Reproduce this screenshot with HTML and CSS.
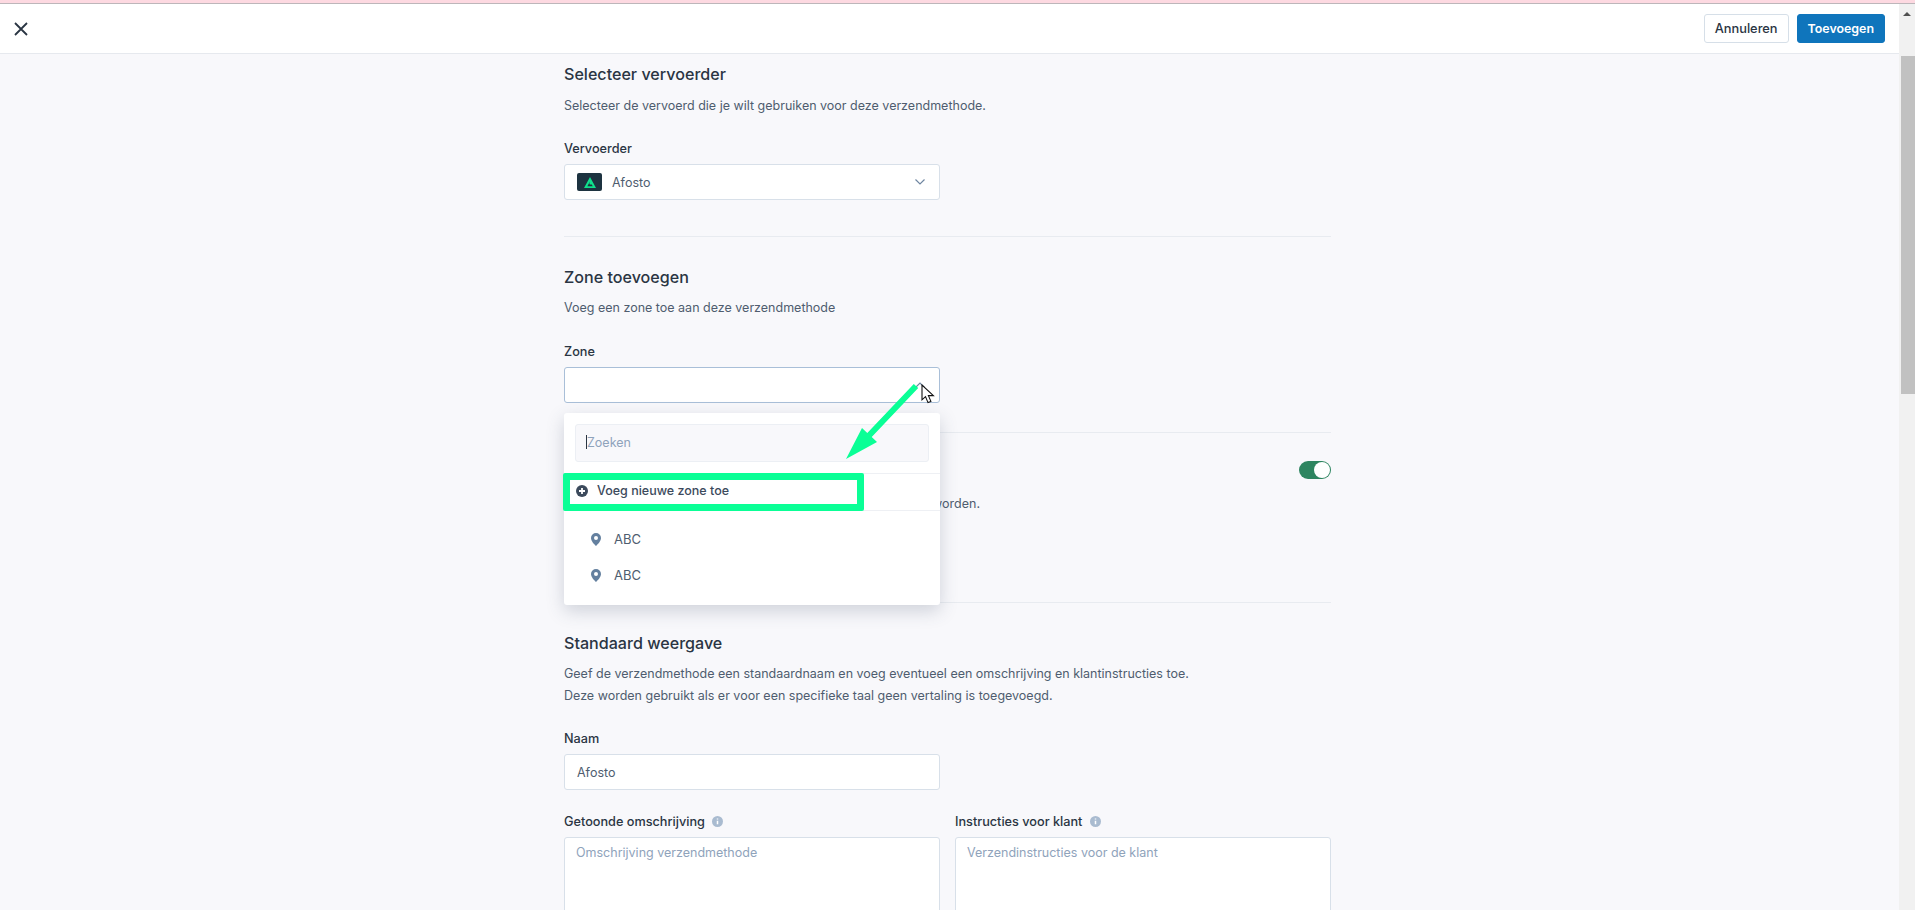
FILE: index.html
```html
<!DOCTYPE html>
<html lang="en">
<head>
  <meta charset="UTF-8" />
  <title>Verzendmethode toevoegen</title>
  <link rel="stylesheet" href="styles.css">
</head>
<body>
  <div class="strip"></div>
  <div class="frame">
    <div class="page">
      <header class="topbar">
        <svg class="close" width="16" height="16" viewBox="0 0 16 16"><path d="M2 2l12 12M14 2L2 14" fill="none" stroke="#2a3543" stroke-width="1.8"/></svg>
        <div class="actions">
          <button class="btn">Annuleren</button>
          <button class="btn primary">Toevoegen</button>
        </div>
      </header>

      <main class="content">
        <section class="section first">
          <h2>Selecteer vervoerder</h2>
          <p class="desc">Selecteer de vervoerd die je wilt gebruiken voor deze verzendmethode.</p>
          <label class="label">Vervoerder</label>
          <div class="field select">
            <span class="logo">
              <svg width="12" height="11" viewBox="0 0 12 11"><path fill-rule="evenodd" d="M6 0l6 11H0zM6 4.500L3.300 9.200h5.400l-.9-1.700H5.900l-.5-.9z" fill="#0fe08c"/></svg>
            </span>
            <span class="value">Afosto</span>
            <svg class="chevron" width="12" height="8" viewBox="0 0 12 8"><path d="M1.500 1.500L6 6l4.500-4.500" fill="none" stroke="#6f86a1" stroke-width="1.200"/></svg>
          </div>
        </section>

        <section class="section zone">
          <h2>Zone toevoegen</h2>
          <p class="desc">Voeg een zone toe aan deze verzendmethode</p>
          <label class="label">Zone</label>
          <div class="field focus">
            <svg class="chevron" width="12" height="8" viewBox="0 0 12 8"><path d="M1.500 6.500L6 2l4.500 4.500" fill="none" stroke="#6f86a1" stroke-width="1.200"/></svg>
          </div>

          <div class="dropdown">
            <div class="search"><span class="caret"></span><span>Zoeken</span></div>
            <div class="add-row">
              <svg width="12" height="12" viewBox="0 0 12 12"><circle cx="6" cy="6" r="6" fill="#3c4a5c"/><path d="M6 3v6M3 6h6" stroke="#fff" stroke-width="1.800"/></svg>
              <span>Voeg nieuwe zone toe</span>
              <div class="highlight"></div>
            </div>
            <ul class="zones">
              <li>
                <svg width="10" height="13" viewBox="0 0 10 13"><path fill-rule="evenodd" d="M5 0a5 5 0 0 1 5 5c0 3-3 6-5 8-2-2-5-5-5-8a5 5 0 0 1 5-5zm0 3a2 2 0 1 0 0 4 2 2 0 0 0 0-4z" fill="#64809f"/></svg>
                <span>ABC</span>
              </li>
              <li>
                <svg width="10" height="13" viewBox="0 0 10 13"><path fill-rule="evenodd" d="M5 0a5 5 0 0 1 5 5c0 3-3 6-5 8-2-2-5-5-5-8a5 5 0 0 1 5-5zm0 3a2 2 0 1 0 0 4 2 2 0 0 0 0-4z" fill="#64809f"/></svg>
                <span>ABC</span>
              </li>
            </ul>
          </div>

          <svg class="pointer" width="84" height="84" viewBox="0 0 84 84"><path d="M73.800 3.900L78.200 8.100 31.700 57.100 37 62 6 79 22 48 27.300 52.900z" fill="#0aff96"/></svg>
          <svg class="cursor" width="15" height="20" viewBox="0 0 15 20"><path d="M1 1v14.800l3.500-3.200 2.500 6 2.900-1.200-2.500-5.800h5z" fill="#fff" stroke="#111" stroke-width="1.100"/></svg>
        </section>

        <section class="section active-zone">
          <div class="switch-row">
            <span class="switch"><i></i></span>
          </div>
          <p class="desc">worden.</p>
        </section>

        <section class="section last">
          <h2>Standaard weergave</h2>
          <p class="desc">Geef de verzendmethode een standaardnaam en voeg eventueel een omschrijving en klantinstructies toe.<br>Deze worden gebruikt als er voor een specifieke taal geen vertaling is toegevoegd.</p>
          <label class="label">Naam</label>
          <div class="field"><span class="value plain">Afosto</span></div>
          <div class="columns">
            <div>
              <label class="label">Getoonde omschrijving <svg class="info" width="11" height="11" viewBox="0 0 11 11"><circle cx="5.500" cy="5.500" r="5.500" fill="#a9bbd0"/><path d="M5.500 2.500v1M5.500 4.800v3.500" stroke="#fff" stroke-width="1.500"/></svg></label>
              <div class="area">Omschrijving verzendmethode</div>
            </div>
            <div>
              <label class="label">Instructies voor klant <svg class="info" width="11" height="11" viewBox="0 0 11 11"><circle cx="5.500" cy="5.500" r="5.500" fill="#a9bbd0"/><path d="M5.500 2.500v1M5.500 4.800v3.500" stroke="#fff" stroke-width="1.500"/></svg></label>
              <div class="area">Verzendinstructies voor de klant</div>
            </div>
          </div>
        </section>
      </main>
    </div>

    <div class="scrollbar">
      <span class="arrow"></span>
      <div class="thumb"></div>
    </div>
  </div>
</body>
</html>
```

FILE: styles.css
```css
* {
  box-sizing: border-box;
}
html, body {
  height: 100%;
}
body {
  margin: 0;
  overflow: hidden;
  display: flex;
  flex-direction: column;
  font-family: Inter, "Noto Sans", sans-serif;
  font-size: 12.5px;
  color: #2a3543;
  background: #f8f8fb;
}
.strip {
  height: 4px;
  flex: none;
  background: #fdd9e1;
  border-bottom: 1px solid #bdb6ba;
}
.frame {
  flex: 1;
  display: flex;
  min-height: 0;
}
.page {
  flex: 1;
  min-width: 0;
  overflow: hidden;
}
.topbar {
  height: 50px;
  display: flex;
  align-items: center;
  justify-content: space-between;
  padding: 0 14px 0 13px;
  background: #fff;
  border-bottom: 1px solid #e6e9ee;
}
.actions {
  display: flex;
  gap: 8px;
}
.btn {
  height: 29px;
  padding: 0 10px;
  font-family: inherit;
  font-size: 12.8px;
  font-weight: 500;
  color: #2a3543;
  background: #fff;
  border: 1px solid #d6dfe8;
  border-radius: 3px;
}
.btn.primary {
  font-size: 12.4px;
  color: #fff;
  font-weight: 600;
  background: #0f75bc;
  border-color: #0f75bc;
}
.content {
  width: 767px;
  margin-left: 564px;
}
.section {
  position: relative;
  padding: 30px 0 36px;
  border-bottom: 1px solid #e8ebf0;
}
.section.first {
  padding-top: 10px;
}
.section.zone {
  padding-bottom: 29px;
}
.section.zone .desc {
  margin-top: 10px;
}
.section.zone .label {
  margin-top: 24px;
}
.section.last {
  padding-top: 30px;
  border-bottom: none;
}
h2 {
  margin: 0;
  font-size: 16.1px;
  line-height: 20px;
  font-weight: 500;
  color: #2a3543;
}
.desc {
  margin: 11px 0 0;
  line-height: 22px;
  color: #4f5d6f;
}
.section.last .desc {
  margin-top: 10px;
}
.label {
  display: block;
  margin: 23px 0 6px;
  font-size: 12.7px;
  line-height: 18px;
  font-weight: 500;
  color: #2a3543;
}
.field {
  width: 376px;
  height: 36px;
  display: flex;
  align-items: center;
  padding: 0 12px;
  background: #fff;
  border: 1px solid #d8e0e9;
  border-radius: 3px;
}
.field.focus {
  border-color: #a9bfd8;
}
.logo {
  width: 25px;
  height: 18px;
  display: flex;
  align-items: center;
  justify-content: center;
  background: #1d3340;
  border-radius: 2px;
}
.value {
  margin-left: 10px;
  color: #4f5d6f;
}
.value.plain {
  margin-left: 0;
}
.chevron {
  margin-left: auto;
  margin-right: 1px;
}
.dropdown {
  position: absolute;
  top: 176px;
  left: 0;
  z-index: 2;
  width: 376px;
  height: 192px;
  background: #fff;
  border-radius: 3px;
  box-shadow: 0 6px 18px rgba(60, 75, 100, 0.22);
}
.search {
  height: 38px;
  margin: 11px;
  padding: 0 10px 2px;
  display: flex;
  align-items: center;
  color: #8fa3bb;
  background: #f8f8fb;
  border: 1px solid #eceff4;
  border-radius: 3px;
}
.caret {
  width: 1px;
  height: 14px;
  background: #2a3543;
}
.add-row {
  position: relative;
  height: 38px;
  display: flex;
  align-items: center;
  gap: 9px;
  padding: 0 0 3px 12px;
  font-weight: 500;
  color: #3c4a5c;
  border-top: 1px solid #eef0f4;
  border-bottom: 1px solid #eef0f4;
}
.highlight {
  position: absolute;
  top: -1px;
  left: -1px;
  width: 301px;
  height: 38px;
  border: 7px solid #0aff96;
  border-radius: 2px;
}
.zones {
  margin: 0;
  padding: 10px 0 0;
  list-style: none;
}
.zones li {
  height: 36px;
  display: flex;
  align-items: center;
  gap: 13px;
  padding-left: 27px;
  font-size: 13px;
  color: #4f5d6f;
}
.pointer {
  position: absolute;
  top: 143px;
  left: 276px;
  z-index: 3;
}
.cursor {
  position: absolute;
  top: 147px;
  left: 357px;
  z-index: 3;
}
.section.active-zone {
  height: 170px;
  padding: 27px 0 0;
}
.switch-row {
  height: 20px;
  display: flex;
  align-items: center;
  justify-content: flex-end;
}
.active-zone .desc {
  width: 416px;
  margin-top: 13px;
  text-align: right;
}
.switch {
  width: 32px;
  height: 18px;
  padding: 1px;
  display: flex;
  justify-content: flex-end;
  background: #2e8560;
  border-radius: 9px;
}
.switch i {
  width: 16px;
  height: 16px;
  background: #fff;
  border-radius: 50%;
}
.columns {
  display: grid;
  grid-template-columns: 376px 376px;
  gap: 15px;
  margin-top: 23px;
}
.columns .label {
  margin-top: 0;
}
.info {
  margin-left: 4px;
  vertical-align: -1px;
}
.area {
  height: 160px;
  padding: 7px 11px;
  color: #8fa3bb;
  background: #fff;
  border: 1px solid #d8e0e9;
  border-radius: 3px;
}
.scrollbar {
  position: relative;
  width: 16px;
  flex: none;
  background: #f1f1f1;
}
.arrow {
  position: absolute;
  top: 8px;
  left: 4px;
  border-left: 4px solid transparent;
  border-right: 4px solid transparent;
  border-bottom: 4px solid #505050;
}
.thumb {
  position: absolute;
  top: 52px;
  left: 2px;
  right: 0;
  height: 338px;
  background: #c1c1c1;
}
```
